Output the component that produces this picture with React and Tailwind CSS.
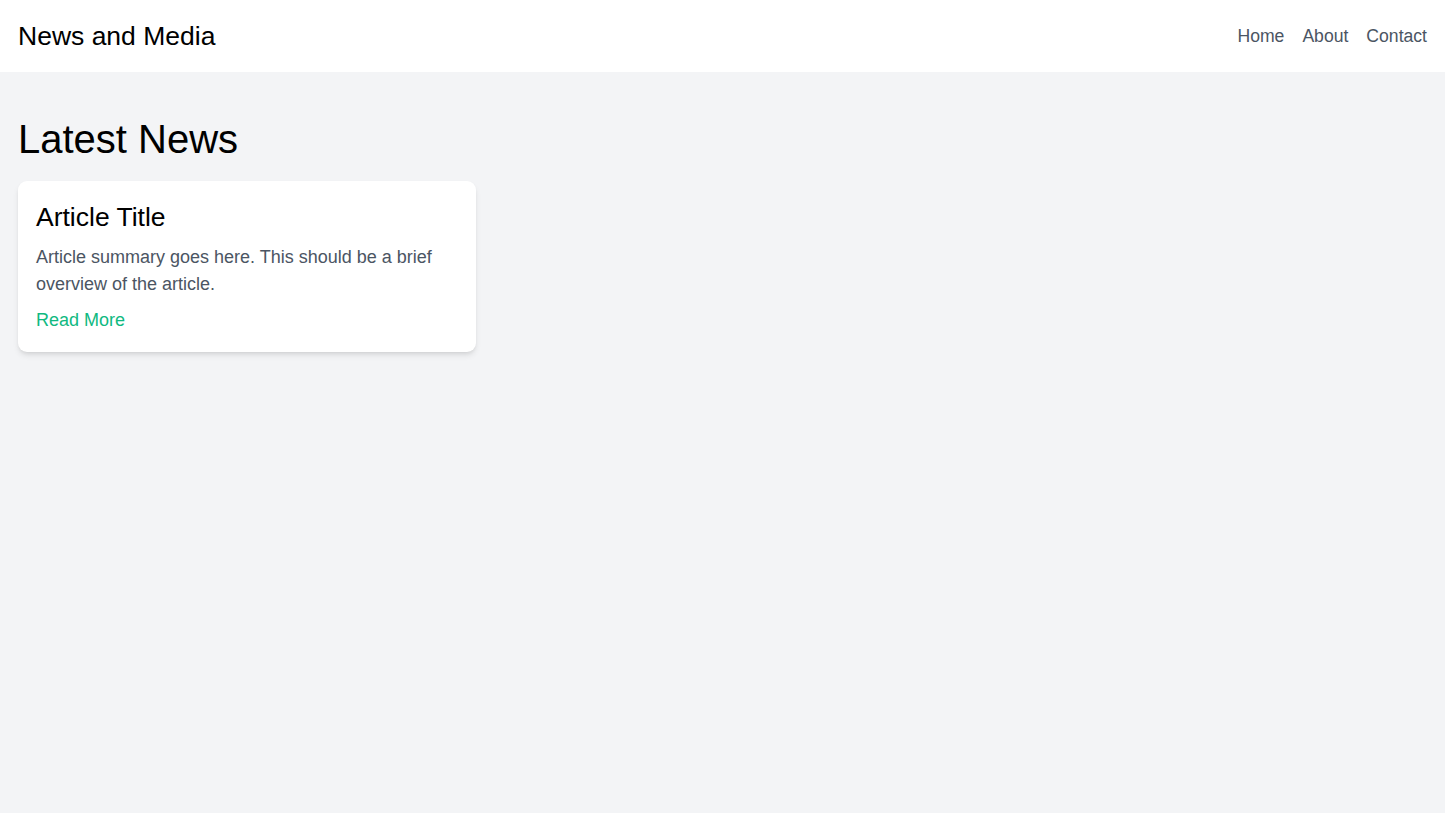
import React from 'react';

const links = ['Home', 'About', 'Contact'];

const ArticleCard = ({ title, summary }) => (
    <div className="bg-white rounded-[9px] shadow-md p-[18px]">
        <h2 className="text-[26.5px] leading-[36px] text-black">{title}</h2>
        <p className="mt-[9px] text-[18px] leading-[27px] text-[#4b5563]">{summary}</p>
        <a href="#" className="block mt-[9px] text-[18px] leading-[27px] text-[#10b981]">
            Read More
        </a>
    </div>
);

export default function App() {
    return (
        <div className="min-h-screen bg-[#f3f4f6] font-['Liberation_Sans',Arial,sans-serif]">
            <header className="bg-white h-[72px] px-[18px] flex items-center justify-between">
                <h1 className="text-[26.5px] leading-[36px] text-black">News and Media</h1>
                <nav className="flex gap-[18px]">
                    {links.map((l) => (
                        <a key={l} href="#" className="text-[17.6px] leading-[27px] text-[#4b5563]">
                            {l}
                        </a>
                    ))}
                </nav>
            </header>

            <main className="px-[18px] pt-[45px]">
                <h2 className="text-[40px] leading-[45px] text-black mb-[19px]">Latest News</h2>
                <div className="grid grid-cols-3 gap-[18px]">
                    <ArticleCard
                        title="Article Title"
                        summary="Article summary goes here. This should be a brief overview of the article."
                    />
                </div>
            </main>
        </div>
    );
}
